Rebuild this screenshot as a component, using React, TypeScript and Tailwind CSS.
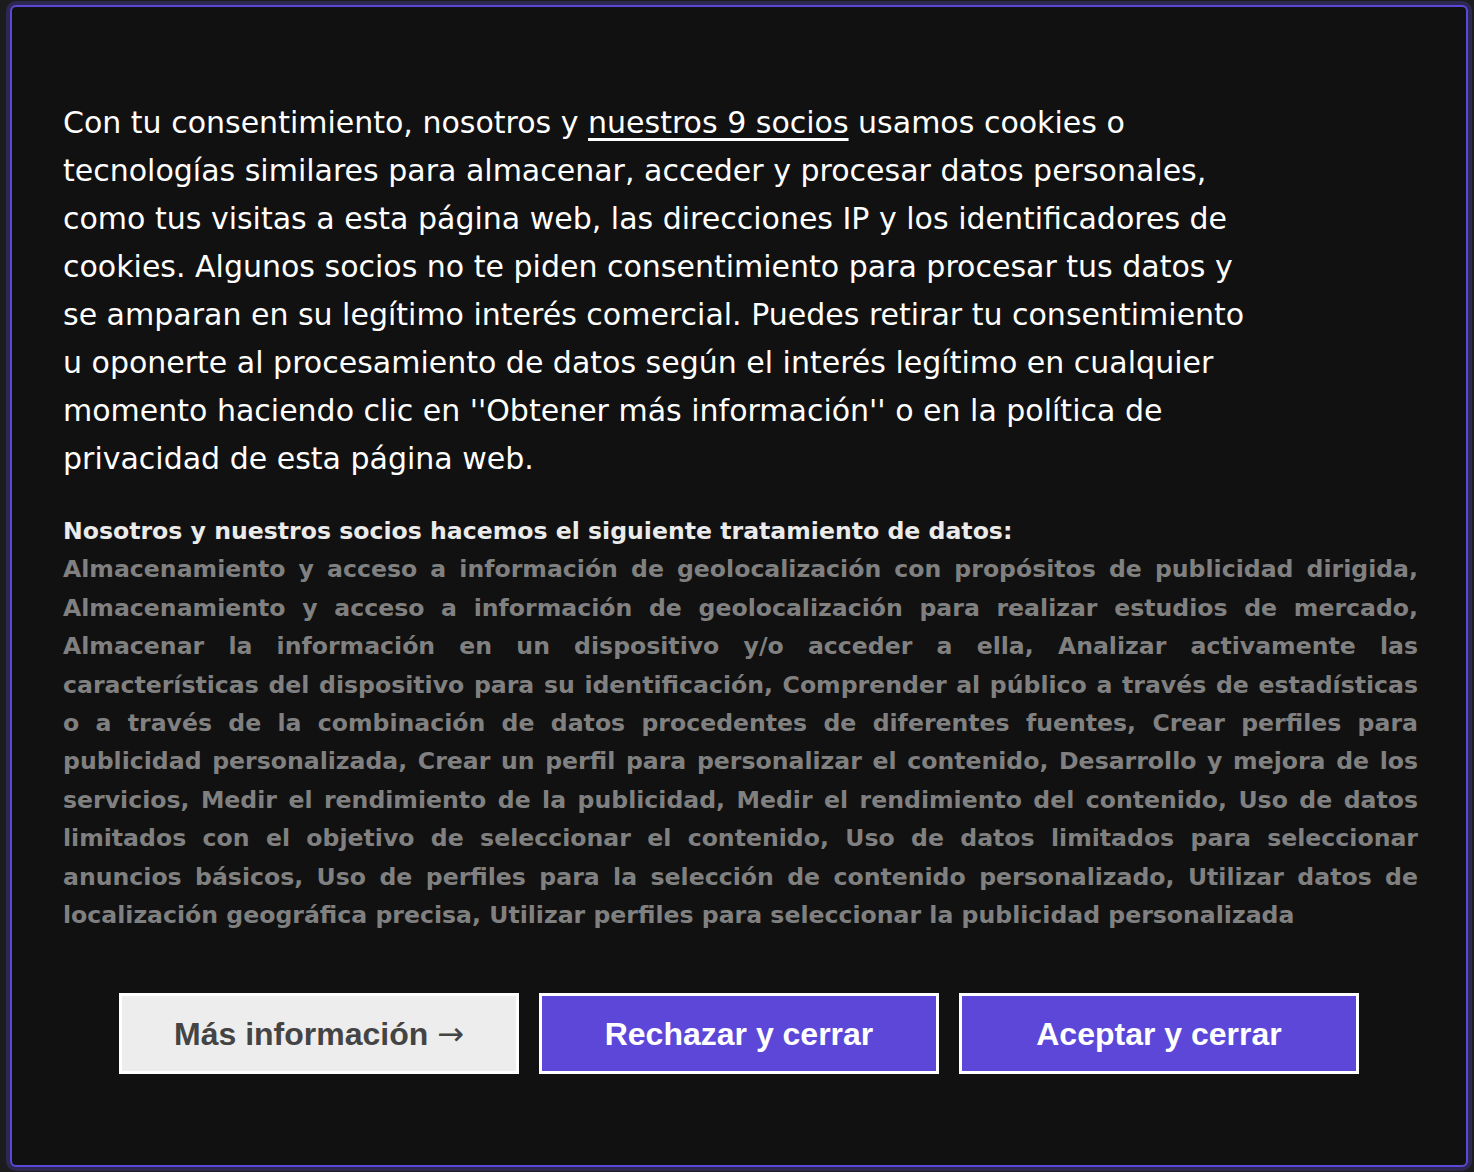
import React from "react";

const purposes = [
  "Almacenamiento y acceso a información de geolocalización con propósitos de publicidad dirigida",
  "Almacenamiento y acceso a información de geolocalización para realizar estudios de mercado",
  "Almacenar la información en un dispositivo y/o acceder a ella",
  "Analizar activamente las características del dispositivo para su identificación",
  "Comprender al público a través de estadísticas o a través de la combinación de datos procedentes de diferentes fuentes",
  "Crear perfiles para publicidad personalizada",
  "Crear un perfil para personalizar el contenido",
  "Desarrollo y mejora de los servicios",
  "Medir el rendimiento de la publicidad",
  "Medir el rendimiento del contenido",
  "Uso de datos limitados con el objetivo de seleccionar el contenido",
  "Uso de datos limitados para seleccionar anuncios básicos",
  "Uso de perfiles para la selección de contenido personalizado",
  "Utilizar datos de localización geográfica precisa",
  "Utilizar perfiles para seleccionar la publicidad personalizada",
];

function ConsentButton({ children, variant }: { children: React.ReactNode; variant: "light" | "primary" }) {
  const colors =
    variant === "light"
      ? "bg-[#ededed] text-[#444444]"
      : "bg-[#5c47d9] text-white";
  return (
    <button
      type="button"
      className={`w-[400px] h-[81px] border-[3px] border-white font-bold text-[32px] ${colors}`}
      style={{ fontFamily: '"Liberation Sans", Arial, sans-serif' }}
    >
      {children}
    </button>
  );
}

export default function App() {
  return (
    <div className="h-[1172px] bg-[#1c1c1e] pt-[5px] pl-[10px]">
      <div
        className="w-[1458px] h-[1162px] bg-[#111111] border-2 border-[#5b48d8] rounded-[6px] shadow-[0_0_0_4px_rgba(91,72,216,0.28)] pt-[92px] pl-[51px] pr-[48px]"
        style={{ fontFamily: '"DejaVu Sans", Verdana, sans-serif' }}
      >
        <p className="w-[1195px] text-[30px] leading-[48px] text-white">
          Con tu consentimiento, nosotros y{" "}
          <a href="#" className="underline underline-offset-[5px]">
            nuestros 9 socios
          </a>{" "}
          usamos cookies o tecnologías similares para almacenar, acceder y procesar datos
          personales, como tus visitas a esta página web, las direcciones IP y los
          identificadores de cookies. Algunos socios no te piden consentimiento para procesar
          tus datos y se amparan en su legítimo interés comercial. Puedes retirar tu
          consentimiento u oponerte al procesamiento de datos según el interés legítimo en
          cualquier momento haciendo clic en ''Obtener más información'' o en la política de
          privacidad de esta página web.
        </p>

        <div className="mt-[29px] text-[23.6px] leading-[38.4px] font-bold">
          <p className="text-[#ebebeb]">
            Nosotros y nuestros socios hacemos el siguiente tratamiento de datos:
          </p>
          <p className="text-[#808080] text-justify">{purposes.join(", ")}</p>
        </div>

        <div className="mt-[59px] flex justify-center gap-5 pr-[3px]">
          <ConsentButton variant="light">
            Más información{" "}
            <span className="font-normal" style={{ fontFamily: '"DejaVu Sans", sans-serif' }}>
              →
            </span>
          </ConsentButton>
          <ConsentButton variant="primary">Rechazar y cerrar</ConsentButton>
          <ConsentButton variant="primary">Aceptar y cerrar</ConsentButton>
        </div>
      </div>
    </div>
  );
}
